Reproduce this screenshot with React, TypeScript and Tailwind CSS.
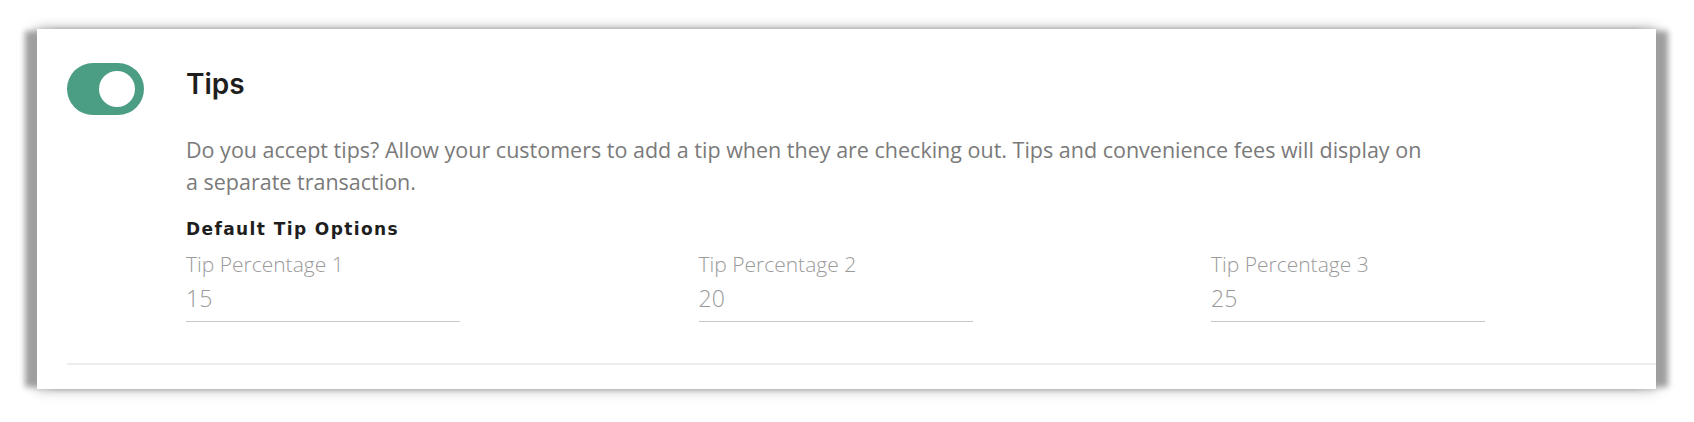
import React from "react";

const tips = [
  { label: "Tip Percentage 1", value: "15" },
  { label: "Tip Percentage 2", value: "20" },
  { label: "Tip Percentage 3", value: "25" },
];

export default function App() {
  return (
    <div className="w-[1694px] h-[422px] bg-white pt-[29px] pl-[37px]">
      <div className="w-[1619px] h-[360px] bg-white pt-[34px] flex flex-col shadow-[-14px_0_6px_-2px_#9e9e9e,14px_0_6px_-2px_#9e9e9e,0_0_12px_0_rgba(0,0,0,0.35)]">
        <div className="flex items-start pl-[30px]">
          <div className="w-[77px] h-[52px] rounded-full bg-[#4b9d84] flex items-center justify-end pr-[9px] shrink-0">
            <div className="w-[36px] h-[36px] rounded-full bg-white" />
          </div>
          <div className="ml-[42px] mt-[5px] flex flex-col">
            <h2 className="text-[28px] leading-[32px] font-semibold text-[#1e1e1e] font-['Inter',sans-serif]">
              Tips
            </h2>
            <p className="mt-[33.5px] w-[1238px] text-[21.5px] leading-[32px] text-[#7a7a7a] font-['Open_Sans',sans-serif]">
              Do you accept tips? Allow your customers to add a tip when they are checking out. Tips and convenience fees will display on a separate transaction.
            </p>
            <h3 className="mt-[19px] text-[17px] leading-[24px] font-bold tracking-[1.4px] text-[#1e1e1e] font-['DejaVu_Sans',sans-serif]">
              Default Tip Options
            </h3>
            <div className="mt-[11px] grid grid-cols-[274px_274px_274px] gap-x-[238.5px]">
              {tips.map((t) => (
                <div key={t.label} className="flex flex-col">
                  <span className="text-[21px] leading-[24px] font-light text-[#9a9a9a] font-['Open_Sans',sans-serif]">
                    {t.label}
                  </span>
                  <span className="mt-[8.5px] pb-[8.5px] border-b border-[#c8c8c8] text-[23px] leading-[28px] font-light text-[#999999] font-['Open_Sans',sans-serif]">
                    {t.value}
                  </span>
                </div>
              ))}
            </div>
          </div>
        </div>
        <div className="mt-[41px] ml-[30px] h-[2px] bg-[#ededed]" />
      </div>
    </div>
  );
}
